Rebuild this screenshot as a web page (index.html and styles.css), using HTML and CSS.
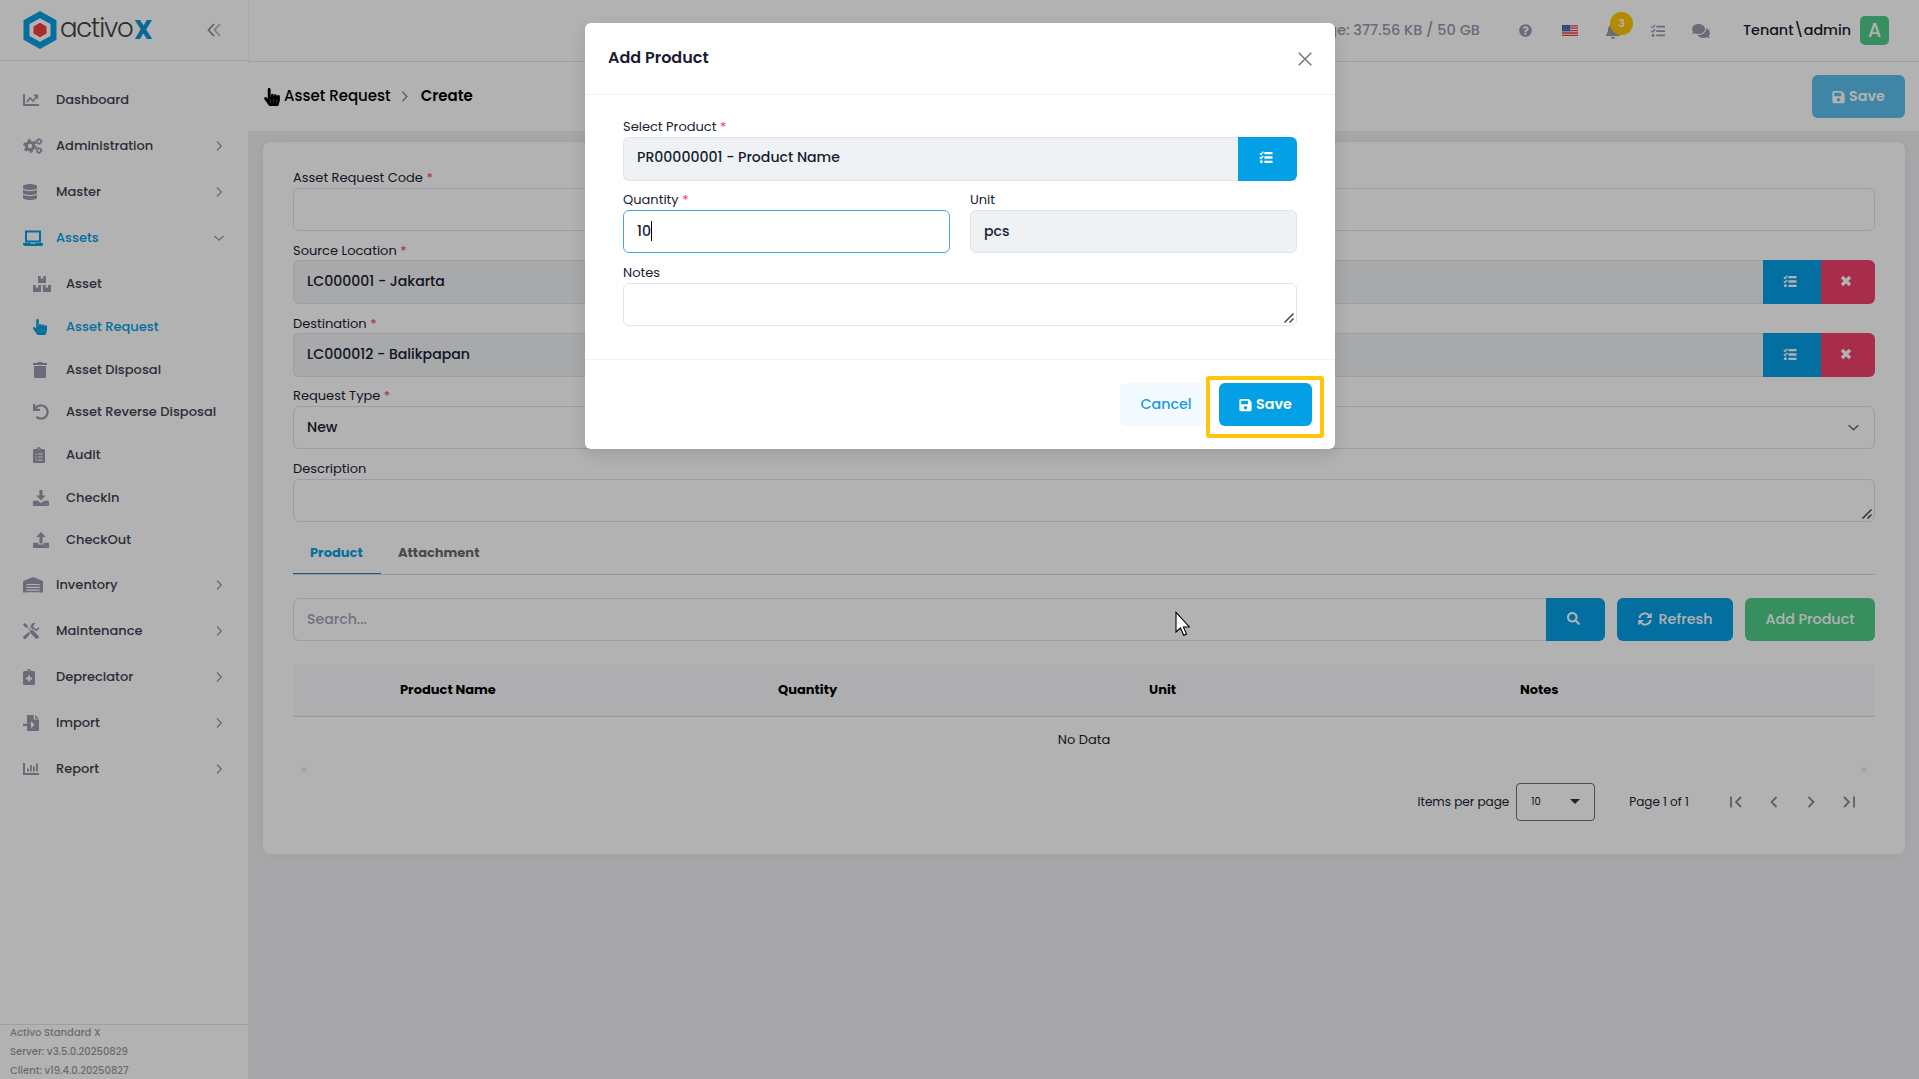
FILE: index.html
```html
<!DOCTYPE html>
<html lang="en">

<head>
  <meta charset="UTF-8">
  <meta name="viewport" content="width=device-width, initial-scale=1.0">
  <title>Asset Request - Create</title>

  <link rel="stylesheet" href="styles.css">
</head>

<body>

  <!-- icons -->
  <svg class="sprite" width="0" height="0">
    <symbol id="i-chart" viewBox="0 0 16 16">
      <path d="M1 2v11h15" fill="none" stroke="currentColor" stroke-width="2" />
      <path d="M4 10l3-4 3 3 4-5" fill="none" stroke="currentColor" stroke-width="1.7" />
      <path d="M10 2.500h5.200v5z" />
    </symbol>
    <symbol id="i-bars" viewBox="0 0 16 16">
      <path d="M1 2v11h15" fill="none" stroke="currentColor" stroke-width="2" />
      <path d="M4 7.500h1.800v3H4zM7 4h1.800v6.500H7zM10 5.500h1.800v5H10zM13 2.500h1.800v8H13z" />
    </symbol>
    <symbol id="i-gears" viewBox="0 0 20 16">
      <g fill="none" stroke="currentColor">
        <circle cx="7" cy="8" r="3.700" stroke-width="3" />
        <circle cx="7" cy="8" r="5.900" stroke-width="2" stroke-dasharray="3 3.180" />
        <circle cx="16" cy="3.500" r="2" stroke-width="1.500" />
        <circle cx="16" cy="3.500" r="3" stroke-width="1" stroke-dasharray="1.570 1.570" />
        <circle cx="16" cy="12.500" r="2" stroke-width="1.500" />
        <circle cx="16" cy="12.500" r="3" stroke-width="1" stroke-dasharray="1.570 1.570" />
      </g>
    </symbol>
    <symbol id="i-database" viewBox="0 0 448 512">
      <path d="M448 73.143v45.714C448 159.143 347.667 192 224 192S0 159.143 0 118.857V73.143C0 32.857 100.333 0 224 0s224 32.857 224 73.143zM448 176v102.857C448 319.143 347.667 352 224 352S0 319.143 0 278.857V176c48.125 33.143 136.208 48.572 224 48.572S399.874 209.143 448 176zm0 160v102.857C448 479.143 347.667 512 224 512S0 479.143 0 438.857V336c48.125 33.143 136.208 48.572 224 48.572S399.874 369.143 448 336z" />
    </symbol>
    <symbol id="i-laptop" viewBox="0 0 20 16">
      <path d="M3 11.500V1.500h14v10z" fill="none" stroke="currentColor" stroke-width="2" />
      <path d="M0 13h7.500l.5.800h4l.5-.8H20v1a2 2 0 0 1-2 2H2a2 2 0 0 1-2-2z" />
    </symbol>
    <symbol id="i-boxes" viewBox="0 0 18 16">
      <path d="M5 0h2.700v3l1.300-.8 1.300.8V0H13v7H5zM0 9h2.700v3l1.200-.8 1.200.8V9h3v7H0zM9.900 9h2.700v3l1.200-.8 1.200.8V9h3v7H9.900z" />
    </symbol>
    <symbol id="i-hand" viewBox="0 0 448 512">
      <path d="M448 240v96c0 3.084-.356 6.159-1.063 9.162l-32 136C410.686 499.230 394.562 512 376 512H168a40.004 40.004 0 0 1-32.350-16.473l-127.997-176c-12.993-17.866-9.043-42.883 8.822-55.876 17.867-12.994 42.884-9.043 55.877 8.823L104 315.992V40c0-22.091 17.908-40 40-40s40 17.909 40 40v200h8v-40c0-22.091 17.908-40 40-40s40 17.909 40 40v40h8v-24c0-22.091 17.908-40 40-40s40 17.909 40 40v24h8c0-22.091 17.908-40 40-40s40 17.909 40 40zm-256 80h-8v96h8v-96zm88 0h-8v96h8v-96zm88 0h-8v96h8v-96z" />
    </symbol>
    <symbol id="i-trash" viewBox="0 0 448 512">
      <path d="M32 464a48 48 0 0 0 48 48h288a48 48 0 0 0 48-48V128H32zM432 32H312l-9.400-18.700A24 24 0 0 0 281.100 0H166.800a23.720 23.720 0 0 0-21.400 13.300L136 32H16A16 16 0 0 0 0 48v32a16 16 0 0 0 16 16h416a16 16 0 0 0 16-16V48a16 16 0 0 0-16-16z" />
    </symbol>
    <symbol id="i-undo" viewBox="0 0 512 512">
      <path d="M212.333 224.333H12c-6.627 0-12-5.373-12-12V12C0 5.373 5.373 0 12 0h48c6.627 0 12 5.373 12 12v78.112C117.773 39.279 184.260 7.470 258.175 8.007c136.906.994 246.448 111.623 246.157 248.532C504.041 393.258 393.120 504 256.333 504c-64.089 0-122.496-24.313-166.510-64.215-5.099-4.622-5.334-12.554-.467-17.420l33.967-33.967c4.474-4.474 11.662-4.717 16.401-.525C170.760 415.336 211.580 432 256.333 432c97.268 0 176-78.716 176-176 0-97.267-78.716-176-176-176-58.496 0-110.280 28.476-142.274 72.333h98.274c6.627 0 12 5.373 12 12v48c0 6.627-5.373 12-12 12z" />
    </symbol>
    <symbol id="i-clipboard" viewBox="0 0 12 16">
      <path fill-rule="evenodd" d="M1.500 2H4a2 2 0 0 1 4 0h2.500A1.500 1.500 0 0 1 12 3.500v11a1.500 1.500 0 0 1-1.500 1.500h-9A1.500 1.500 0 0 1 0 14.500v-11A1.500 1.500 0 0 1 1.500 2zM5.400 2a.6.600 0 1 0 1.200 0 .6.600 0 1 0-1.200 0zM2.500 6.500v1.200h1.200V6.500zM5 6.600v1h4.500v-1zM2.500 9.400v1.200h1.200V9.400zM5 9.500v1h4.500v-1zM2.500 12.300v1.200h1.200v-1.200zM5 12.400v1h4.500v-1z" />
    </symbol>
    <symbol id="i-medical" viewBox="0 0 12 16">
      <path fill-rule="evenodd" d="M1.500 2H4a2 2 0 0 1 4 0h2.500A1.500 1.500 0 0 1 12 3.500v11a1.500 1.500 0 0 1-1.500 1.500h-9A1.500 1.500 0 0 1 0 14.500v-11A1.500 1.500 0 0 1 1.500 2zM5.400 2a.6.600 0 1 0 1.200 0 .6.600 0 1 0-1.200 0zM5 6.500v2H3v2h2v2h2v-2h2v-2H7v-2z" />
    </symbol>
    <symbol id="i-download" viewBox="0 0 16 16">
      <path d="M6.500 0h3v5.500h3.200L8 10.400 3.300 5.500h3.200z" />
      <path fill-rule="evenodd" d="M.8 10.800H5l3 2.400 3-2.400h4.200a.8.800 0 0 1 .8.800V15.200a.8.800 0 0 1-.8.800H.8a.8.800 0 0 1-.8-.8V11.600a.8.800 0 0 1 .8-.8zM12.800 13.500v1h1v-1z" />
    </symbol>
    <symbol id="i-upload" viewBox="0 0 16 16">
      <path d="M6.500 11.500h3V5h3.200L8 0 3.300 5h3.200z" />
      <path fill-rule="evenodd" d="M.8 10.800h4.400V12.500h5.600v-1.700h4.400a.8.800 0 0 1 .8.800V15.200a.8.800 0 0 1-.8.800H.8a.8.800 0 0 1-.8-.8V11.600a.8.800 0 0 1 .8-.8zM12.800 13.500v1h1v-1z" />
    </symbol>
    <symbol id="i-warehouse" viewBox="0 0 20 16">
      <path d="M0 15.500V5q0-.8.800-1.200L9.400.3q.6-.2 1.200 0l8.600 3.500q.8.400.8 1.200v10.500h-3.500V7h-13v8.500z" />
      <path d="M3.500 8.900h13M3.500 11.700h13M3.500 14.500h13" fill="none" stroke="currentColor" stroke-width="1.600" />
    </symbol>
    <symbol id="i-tools" viewBox="0 0 16 16">
      <path d="M1.500 0L4.500 2.300v1.600l3.300 3.300q1.500-.5 2.700.6l4.900 4.900q.9 1.100 0 2.100l-.6.600q-1 .9-2.100 0L7.800 10.500Q6.700 9.300 7.200 7.800L3.900 4.500H2.300L0 1.500z" />
      <path d="M15.800 3.800l-2.300 2.200-2.600-.9-.6-2.500L12.500.2Q9.800-.4 8.400 1.400 7.200 2.900 7.600 4.600l1.700 1.700q2 .1 3.200 1.300.4.300.7.600Q14.600 7.600 15.400 6.400 16.200 5.200 15.800 3.800zM6.300 8.800L.7 13.100q-1.200 1.500 0 2.500t2.300-.2l4-4.300q-.7-1.100-.7-2.300z" />
    </symbol>
    <symbol id="i-import" viewBox="0 0 16 16">
      <path fill-rule="evenodd" d="M4.700 0h6v4.500H16v10.800a.7.700 0 0 1-.7.700H4.700a.7.700 0 0 1-.7-.7V11h4v2.300L11.700 9.700 8 6.200v2.600H4V.7A.7.700 0 0 1 4.700 0z" />
      <path d="M0 8.800h8V11H0zM12 0l4 3.500h-4z" />
    </symbol>
    <symbol id="i-save" viewBox="0 0 448 512">
      <path d="M433.941 129.941l-83.882-83.882A48 48 0 0 0 316.118 32H48C21.490 32 0 53.490 0 80v352c0 26.510 21.490 48 48 48h352c26.510 0 48-21.490 48-48V163.882a48 48 0 0 0-14.059-33.941zM224 416c-35.346 0-64-28.654-64-64 0-35.346 28.654-64 64-64s64 28.654 64 64c0 35.346-28.654 64-64 64zm96-304.520V212c0 6.627-5.373 12-12 12H76c-6.627 0-12-5.373-12-12V108c0-6.627 5.373-12 12-12h228.520c3.183 0 6.235 1.264 8.485 3.515l3.480 3.480A11.996 11.996 0 0 1 320 111.480z" />
    </symbol>
    <symbol id="i-search" viewBox="0 0 512 512">
      <path d="M505 442.700L405.300 343c-4.500-4.500-10.600-7-17-7H372c27.600-35.300 44-79.700 44-128C416 93.100 322.900 0 208 0S0 93.100 0 208s93.100 208 208 208c48.300 0 92.700-16.400 128-44v16.300c0 6.400 2.500 12.500 7 17l99.700 99.700c9.400 9.400 24.600 9.400 33.900 0l28.300-28.300c9.400-9.400 9.400-24.600.1-34zM208 336c-70.700 0-128-57.200-128-128 0-70.700 57.200-128 128-128 70.700 0 128 57.200 128 128 0 70.700-57.200 128-128 128z" />
    </symbol>
    <symbol id="i-refresh" viewBox="0 0 16 16">
      <path d="M1.600 7A6.300 6.300 0 0 1 12.800 4M14.400 9A6.300 6.300 0 0 1 3.200 12" fill="none" stroke="currentColor" stroke-width="2.200" />
      <path d="M15.700.5v6.300H9.400zM.3 15.500V9.200h6.300z" />
    </symbol>
    <symbol id="i-list" viewBox="0 0 16 16">
      <path d="M6 3h10M6 8h10M6 13h10" fill="none" stroke="currentColor" stroke-width="2" />
      <path d="M.4 2.700l1.500 1.500L4.700 1M.4 7.700l1.500 1.500L4.700 6" fill="none" stroke="currentColor" stroke-width="1.400" />
      <circle cx="2.300" cy="13" r="1.600" />
    </symbol>
    <symbol id="i-list-bold" viewBox="0 0 16 16">
      <path d="M6 2.700h10M6 8h10M6 13.300h10" fill="none" stroke="currentColor" stroke-width="2.900" />
      <path d="M.4 2.700l1.500 1.500L4.700 1M.4 7.700l1.500 1.500L4.700 6" fill="none" stroke="currentColor" stroke-width="1.800" />
      <circle cx="2.300" cy="13.300" r="1.800" />
    </symbol>
    <symbol id="i-times" viewBox="0 0 12 12">
      <path d="M2 2l8 8M10 2l-8 8" fill="none" stroke="currentColor" stroke-width="3.200" />
    </symbol>
    <symbol id="i-question" viewBox="0 0 512 512">
      <path d="M504 256c0 136.997-111.043 248-248 248S8 392.997 8 256C8 119.083 119.043 8 256 8s248 111.083 248 248zM262.655 90c-54.497 0-89.255 22.957-116.549 63.758-3.536 5.286-2.353 12.415 2.715 16.258l34.699 26.310c5.205 3.947 12.621 3.008 16.665-2.122 17.864-22.658 30.113-35.797 57.303-35.797 20.429 0 45.698 13.148 45.698 32.958 0 14.976-12.363 22.667-32.534 33.976C247.128 238.528 216 254.941 216 296v4c0 6.627 5.373 12 12 12h56c6.627 0 12-5.373 12-12v-1.333c0-28.462 83.186-29.647 83.186-106.667 0-58.002-60.165-102-116.531-102zM256 338c-25.365 0-46 20.635-46 46 0 25.364 20.635 46 46 46s46-20.636 46-46c0-25.365-20.635-46-46-46z" />
    </symbol>
    <symbol id="i-bell" viewBox="0 0 448 512">
      <path d="M224 512c35.320 0 63.970-28.650 63.970-64H160.030c0 35.350 28.650 64 63.970 64zm215.390-149.710c-19.320-20.760-55.470-51.990-55.470-154.290 0-77.700-54.480-139.900-127.940-155.160V32c0-17.670-14.320-32-31.980-32s-31.980 14.330-31.980 32v20.840C118.560 68.100 64.080 130.300 64.080 208c0 102.300-36.150 133.530-55.470 154.290-6 6.450-8.660 14.160-8.610 21.710.11 16.400 12.980 32 32.100 32h383.800c19.120 0 32-15.600 32.100-32 .05-7.550-2.610-15.270-8.610-21.710z" />
    </symbol>
    <symbol id="i-comments" viewBox="0 0 576 512">
      <path d="M416 192c0-88.400-93.100-160-208-160S0 103.600 0 192c0 34.300 14.100 65.900 38 92-13.400 30.200-35.500 54.200-35.800 54.500-2.200 2.300-2.800 5.700-1.500 8.700S4.800 352 8 352c36.600 0 66.900-12.300 88.700-25 32.200 15.700 70.300 25 111.300 25 114.900 0 208-71.600 208-160zm122 220c23.900-26 38-57.700 38-92 0-66.900-53.500-124.200-129.300-148.100.9 6.600 1.300 13.300 1.300 20.100 0 105.900-107.700 192-240 192-10.800 0-21.300-.8-31.700-1.900C207.800 439.600 281.800 480 368 480c41 0 79.100-9.200 111.300-25 21.800 12.700 52.100 25 88.700 25 3.200 0 6.100-1.900 7.300-4.800 1.300-2.900.7-6.300-1.500-8.700-.3-.3-22.400-24.200-35.800-54.500z" />
    </symbol>
    <symbol id="i-angle" viewBox="0 0 8 12">
      <path d="M2 1.500L6.200 6 2 10.500" fill="none" stroke="currentColor" stroke-width="1.300" />
    </symbol>
    <symbol id="i-grip" viewBox="0 0 10 10">
      <path d="M.5 9.500l9-9M5.500 9.500l4-4" fill="none" stroke="#444" stroke-width="1.500" />
    </symbol>
  </svg>

  <div class="page">

    <aside class="sidebar">
      <div class="brand">
        <svg class="logo" viewBox="0 0 34 38">
          <path d="M17 0l16.500 9.200v19.600L17 38 .5 28.800V9.200z" fill="#0aa0e0" />
          <path d="M17 7.200l10.500 5.900v11.800L17 30.800 6.500 24.900V13.100z" fill="#fff" />
          <path d="M17 11.800l6.500 3.600v7.200L17 26.200l-6.500-3.600v-7.200z" fill="#f0403e" />
        </svg>
        <span class="logo-text">activo</span><span class="logo-x">X</span>
        <svg class="toggle" viewBox="0 0 14 14">
          <path d="M7 1L1.500 7 7 13" fill="none" stroke="#8a8a9c" stroke-width="1.800" />
          <path d="M13 1L7.500 7l5.500 6" fill="none" stroke="#b5b5c3" stroke-width="1.800" />
        </svg>
      </div>

      <nav class="menu">
        <a class="item"><svg class="w16"><use href="#i-chart" /></svg><span>Dashboard</span></a>
        <a class="item"><svg class="w20"><use href="#i-gears" /></svg><span>Administration</span><svg class="arrow"><use href="#i-angle" /></svg></a>
        <a class="item"><svg class="w14"><use href="#i-database" /></svg><span>Master</span><svg class="arrow"><use href="#i-angle" /></svg></a>
        <a class="item active"><svg class="w20"><use href="#i-laptop" /></svg><span>Assets</span><svg class="arrow open"><use href="#i-angle" /></svg></a>
        <div class="submenu">
          <a class="item"><svg class="w18"><use href="#i-boxes" /></svg><span>Asset</span></a>
          <a class="item active"><svg class="w14"><use href="#i-hand" /></svg><span>Asset Request</span></a>
          <a class="item"><svg class="w14"><use href="#i-trash" /></svg><span>Asset Disposal</span></a>
          <a class="item"><svg class="w16"><use href="#i-undo" /></svg><span>Asset Reverse Disposal</span></a>
          <a class="item"><svg class="w12"><use href="#i-clipboard" /></svg><span>Audit</span></a>
          <a class="item"><svg class="w16"><use href="#i-download" /></svg><span>CheckIn</span></a>
          <a class="item"><svg class="w16"><use href="#i-upload" /></svg><span>CheckOut</span></a>
        </div>
        <a class="item"><svg class="w20"><use href="#i-warehouse" /></svg><span>Inventory</span><svg class="arrow"><use href="#i-angle" /></svg></a>
        <a class="item"><svg class="w16"><use href="#i-tools" /></svg><span>Maintenance</span><svg class="arrow"><use href="#i-angle" /></svg></a>
        <a class="item"><svg class="w12"><use href="#i-medical" /></svg><span>Depreciator</span><svg class="arrow"><use href="#i-angle" /></svg></a>
        <a class="item"><svg class="w16"><use href="#i-import" /></svg><span>Import</span><svg class="arrow"><use href="#i-angle" /></svg></a>
        <a class="item"><svg class="w16"><use href="#i-bars" /></svg><span>Report</span><svg class="arrow"><use href="#i-angle" /></svg></a>
      </nav>

      <div class="version">
        <p>Activo Standard X</p>
        <p>Server: v3.5.0.20250829</p>
        <p>Client: v19.4.0.20250827</p>
      </div>
    </aside>

    <div class="main">
      <header class="topbar">
        <span class="usage">Usage: 377.56 KB / 50 GB</span>
        <svg class="question"><use href="#i-question" /></svg>
        <svg class="flag" viewBox="0 0 16 11">
          <path d="M0 0h16v11H0z" fill="#fff" />
          <path d="M0 .8h16M0 3.200h16M0 5.600h16M0 8h16M0 10.300h16" stroke="#e0444c" stroke-width="1.300" />
          <path d="M0 0h8v6.200H0z" fill="#3b5fb5" />
          <path d="M1 1.500h6M1 3.200h6M1 4.900h6" stroke="#b9c6ea" stroke-width=".6" stroke-dasharray=".8 .8" />
        </svg>
        <div class="bell">
          <svg><use href="#i-bell" /></svg>
          <span class="count">3</span>
        </div>
        <svg class="tasks"><use href="#i-list" /></svg>
        <svg class="comments"><use href="#i-comments" /></svg>
        <span class="user">Tenant\admin</span>
        <span class="avatar">A</span>
      </header>

      <div class="subheader">
        <svg class="hand"><use href="#i-hand" /></svg>
        <span class="crumb">Asset Request</span>
        <svg class="sep"><use href="#i-angle" /></svg>
        <span class="crumb last">Create</span>
        <button type="button" class="btn primary disabled"><svg><use href="#i-save" /></svg>Save</button>
      </div>

      <div class="card">
        <div class="field">
          <label>Asset Request Code <i>*</i></label>
          <div class="input"></div>
        </div>
        <div class="field">
          <label>Source Location <i>*</i></label>
          <div class="group">
            <div class="input readonly">LC000001 - Jakarta</div>
            <button type="button" class="pick"><svg><use href="#i-list-bold" /></svg></button>
            <button type="button" class="clear"><svg><use href="#i-times" /></svg></button>
          </div>
        </div>
        <div class="field">
          <label>Destination <i>*</i></label>
          <div class="group">
            <div class="input readonly">LC000012 - Balikpapan</div>
            <button type="button" class="pick"><svg><use href="#i-list-bold" /></svg></button>
            <button type="button" class="clear"><svg><use href="#i-times" /></svg></button>
          </div>
        </div>
        <div class="field">
          <label>Request Type <i>*</i></label>
          <div class="input select">New<svg><use href="#i-angle" /></svg></div>
        </div>
        <div class="field">
          <label>Description</label>
          <div class="input area"><svg><use href="#i-grip" /></svg></div>
        </div>

        <div class="tabs">
          <a class="tab active">Product</a>
          <a class="tab">Attachment</a>
        </div>

        <div class="toolbar">
          <div class="input search">Search...</div>
          <button type="button" class="find"><svg><use href="#i-search" /></svg></button>
          <button type="button" class="btn primary refresh"><svg><use href="#i-refresh" /></svg>Refresh</button>
          <button type="button" class="btn success">Add Product</button>
        </div>

        <div class="thead">
          <span>Product Name</span>
          <span>Quantity</span>
          <span>Unit</span>
          <span>Notes</span>
        </div>
        <p class="empty">No Data</p>
        <div class="scroll"><i></i><i></i></div>

        <div class="paginator">
          <span class="per">Items per page</span>
          <div class="size">10<i></i></div>
          <span class="range">Page 1 of 1</span>
          <svg viewBox="0 0 16 16"><path d="M3 2.500v11M13 3L8 8l5 5" /></svg>
          <svg viewBox="0 0 16 16"><path d="M10.500 3l-5 5 5 5" /></svg>
          <svg viewBox="0 0 16 16"><path d="M5.500 3l5 5-5 5" /></svg>
          <svg viewBox="0 0 16 16"><path d="M3 3l5 5-5 5M13 2.500v11" /></svg>
        </div>
      </div>
    </div>
  </div>

  <div class="overlay">
    <div class="modal">
      <div class="modal-header">
        <h5>Add Product</h5>
        <svg viewBox="0 0 14 14"><path d="M.7.700l12.600 12.600M13.300.7L.7 13.300" /></svg>
      </div>
      <div class="modal-body">
        <div class="field">
          <label>Select Product <i>*</i></label>
          <div class="group">
            <div class="input readonly">PR00000001 - Product Name</div>
            <button type="button" class="pick"><svg><use href="#i-list-bold" /></svg></button>
          </div>
        </div>
        <div class="row">
          <div class="field">
            <label>Quantity <i>*</i></label>
            <div class="input focus">10<b class="caret"></b></div>
          </div>
          <div class="field">
            <label>Unit</label>
            <div class="input readonly">pcs</div>
          </div>
        </div>
        <div class="field">
          <label>Notes</label>
          <div class="input area"><svg><use href="#i-grip" /></svg></div>
        </div>
      </div>
      <div class="modal-footer">
        <button type="button" class="btn light">Cancel</button>
        <button type="button" class="btn primary"><svg><use href="#i-save" /></svg>Save</button>
        <div class="highlight"></div>
      </div>
    </div>
  </div>

  <svg class="cursor" viewBox="0 0 15 25">
    <path d="M1 1v19.500l4.500-4 3.200 7.300 2.800-1.200-3.100-7.100h6z" fill="#fff" stroke="#000" stroke-width="1.100" />
  </svg>

</body>

</html>
```

FILE: styles.css
```css
* {
  box-sizing: border-box;
}

body {
  margin: 0;
  height: 1079px;
  overflow: hidden;
  background-color: #f0f0f3;
  color: #181c32;
  font-family: Poppins, Inter, "Open Sans", sans-serif;
  font-size: 13px;
}

p,
h5 {
  margin: 0;
}

svg {
  fill: currentColor;
  flex-shrink: 0;
}

button {
  border: 0;
  padding: 0;
  font: inherit;
  color: #fff;
}

.sprite {
  position: absolute;
}

.page {
  display: flex;
  height: 1079px;
}

/* sidebar */
.sidebar {
  width: 248px;
  background-color: #fff;
  display: flex;
  flex-direction: column;
  flex-shrink: 0;
}

.brand {
  height: 61px;
  border-bottom: 1px solid #e8e8ec;
  padding-left: 23px;
  display: flex;
  align-items: center;
}

.logo {
  width: 34px;
  height: 38px;
}

.logo-text {
  width: 72px;
  margin-left: 3px;
  font-size: 26px;
  font-weight: 300;
  letter-spacing: -1.2px;
  line-height: 30px;
  color: #3f4245;
  margin-top: -4px;
}

.logo-x {
  width: 20px;
  margin-left: 2px;
  font-size: 26px;
  font-weight: 700;
  color: #0b94d6;
}

.toggle {
  width: 14px;
  height: 14px;
  margin-left: 53px;
}

.menu {
  flex: 1;
  padding-top: 16px;
}

.item {
  height: 46px;
  padding: 0 25px 0 23px;
  display: flex;
  align-items: center;
  color: #3f4254;
  font-weight: 500;
}

.item span {
  flex: 1;
  white-space: nowrap;
}

.item svg {
  height: 16px;
  color: #9899ac;
}

.w12 { width: 12px; margin-right: 21px; }
.w14 { width: 14px; margin-right: 19px; }
.w16 { width: 16px; margin-right: 17px; }
.w18 { width: 18px; margin-right: 15px; }
.w20 { width: 20px; margin-right: 13px; }

.item .arrow {
  width: 8px;
  height: 12px;
}

.item .open {
  transform: rotate(90deg);
}

.item.active,
.item.active svg {
  color: #04a0e6;
}

.item.active .arrow {
  color: #9899ac;
}

.submenu {
  padding: 2px 0 0;
}

.submenu .item {
  height: 42.700px;
  padding-left: 33px;
}

.version {
  height: 55px;
  padding-left: 10px;
  border-top: 1px solid #e4e4e8;
  font-size: 10px;
  font-weight: 500;
  line-height: 19px;
  color: #9899a4;
}

.version p:first-child {
  line-height: 15px;
  margin-bottom: 2px;
}

/* header */
.main {
  flex: 1;
}

.topbar {
  height: 62px;
  background-color: #fff;
  border-bottom: 1px solid #e4e4e8;
  border-left: 1px solid #f4f4f6;
  padding-right: 29px;
  display: flex;
  align-items: center;
  justify-content: flex-end;
  color: #9899ac;
}

.usage {
  font-size: 14.500px;
  font-weight: 500;
  margin-right: 39px;
}

.question {
  width: 13px;
  height: 13px;
}

.flag {
  width: 16px;
  height: 11px;
  margin-left: 30px;
}

.bell {
  position: relative;
  width: 14px;
  height: 16px;
  margin-left: 28px;
}

.bell svg {
  display: block;
  width: 14px;
  height: 16px;
}

.count {
  position: absolute;
  left: 4px;
  top: -11px;
  width: 23px;
  height: 23px;
  border-radius: 50%;
  background-color: #ffc700;
  color: #fff;
  font-size: 11px;
  font-weight: 600;
  line-height: 23px;
  text-align: center;
}

.tasks {
  width: 14px;
  height: 14px;
  margin-left: 31px;
}

.comments {
  width: 18px;
  height: 16px;
  margin-left: 27px;
}

.user {
  width: 108px;
  margin-left: 33px;
  font-size: 14.300px;
  font-weight: 500;
  color: #181c32;
  white-space: nowrap;
}

.avatar {
  width: 29px;
  height: 29px;
  margin-left: 9px;
  margin-right: 1px;
  border-radius: 5px;
  background-color: #50cd89;
  color: #fff;
  font-size: 19px;
  font-weight: 500;
  line-height: 29px;
  text-align: center;
}

.subheader {
  height: 69px;
  background-color: #fff;
  padding: 0 14px 0 16px;
  display: flex;
  align-items: center;
  font-size: 15px;
  font-weight: 500;
  color: #000;
}

.subheader .hand {
  width: 16px;
  height: 18px;
}

.crumb {
  margin-left: 4px;
  margin-top: -2px;
}

.sep {
  width: 9px;
  height: 13px;
  margin: 0 8px 0 9px;
  color: #7e8299;
}

.crumb.last {
  flex: 1;
  font-weight: 600;
}

/* buttons */
.btn {
  height: 43px;
  border-radius: 6px;
  display: flex;
  align-items: center;
  justify-content: center;
  font-size: 14.300px;
  font-weight: 500;
}

.btn svg {
  width: 13px;
  height: 14px;
  margin-right: 4px;
}

.primary {
  width: 93px;
  background-color: #04a0e6;
  font-weight: 600;
}

.disabled {
  opacity: 0.65;
}

.success {
  width: 130px;
  margin-left: 12px;
  background-color: #50cd89;
}

.light {
  width: 92px;
  background-color: #f3faff;
  color: #1b9be0;
}

.refresh {
  width: 116px;
  margin-left: 12px;
  font-weight: 500;
}

.refresh svg {
  width: 14px;
  margin-right: 7px;
}

/* form */
.card {
  height: 712px;
  margin: 11px 14px 0 15px;
  padding: 26px 30px 0;
  background-color: #fff;
  border-radius: 8px;
  box-shadow: 0 0 12px rgba(76, 87, 125, 0.08);
}

.field {
  height: 72.800px;
}

.field label {
  display: block;
  height: 19.600px;
  line-height: 20px;
  font-size: 13px;
}

.field label i {
  color: #f1416c;
  font-style: normal;
}

.input {
  display: flex;
  align-items: center;
  width: 100%;
  height: 43px;
  padding: 0 13px;
  border: 1px solid #e1e3ea;
  border-radius: 6px;
  background-color: #fff;
  font-size: 14.100px;
  font-weight: 500;
}

.readonly {
  background-color: #eff2f5;
}

.focus {
  border-color: #4ba3e3;
}

.caret {
  width: 1px;
  height: 20px;
  background-color: #000;
}

.group {
  display: flex;
  height: 44px;
}

.group .input {
  flex: 1;
  height: 44px;
  padding-bottom: 2px;
  border-right: 0;
  border-radius: 6px 0 0 6px;
}

.pick,
.clear,
.find {
  display: flex;
  align-items: center;
  justify-content: center;
  padding: 0 4px 2px 0;
}

.pick {
  width: 59px;
  background-color: #04a0e6;
}

.pick:last-child {
  border-radius: 0 6px 6px 0;
}

.pick svg {
  width: 14px;
  height: 13px;
}

.clear {
  width: 54px;
  background-color: #f1416c;
  border-radius: 0 6px 6px 0;
}

.clear svg {
  width: 12px;
  height: 12px;
}

.card .pick {
  width: 58px;
}

.select {
  justify-content: space-between;
}

.select svg {
  width: 9px;
  height: 13px;
  margin-right: 3px;
  color: #5e6278;
  transform: rotate(90deg);
}

.area {
  align-items: flex-end;
  justify-content: flex-end;
  padding: 0 2px 2px 0;
}

.area svg {
  width: 10px;
  height: 10px;
}

.tabs {
  display: flex;
  height: 43px;
  border-bottom: 1px solid #d9dae0;
}

.tab {
  height: 42px;
  padding: 11px 17px 0;
  font-weight: 700;
  color: #68696e;
}

.tab.active {
  width: 88px;
  border-bottom: 1px solid #1b84cf;
  color: #04a0e6;
}

.toolbar {
  display: flex;
  margin-top: 23px;
}

.toolbar .search {
  flex: 1;
  border-right: 0;
  border-radius: 6px 0 0 6px;
  color: #a1a5b7;
}

.find {
  width: 59px;
  background-color: #04a0e6;
  border-radius: 0 6px 6px 0;
}

.find svg {
  width: 13px;
  height: 13px;
}

.thead {
  height: 53px;
  margin-top: 23px;
  padding-left: 107px;
  background-color: #f9fafc;
  border-bottom: 1px solid #d5d8e0;
  display: grid;
  grid-template-columns: 378px 371px 371px 1fr;
  align-items: center;
  font-weight: 700;
  color: #000;
}

.empty {
  padding-top: 14px;
  line-height: 18px;
  text-align: center;
}

.scroll {
  display: flex;
  justify-content: space-between;
  margin-top: 18px;
  padding: 0 8px;
}

.scroll i {
  width: 6px;
  height: 6px;
  border-radius: 50%;
  background-color: #ececef;
}

.paginator {
  display: flex;
  align-items: center;
  justify-content: flex-end;
  height: 38px;
  margin-top: 10px;
  padding-right: 18px;
  font-size: 12px;
}

.per {
  margin-right: 7px;
}

.size {
  width: 79px;
  height: 38px;
  padding: 0 14px;
  border: 1px solid #6e6e73;
  border-radius: 4px;
  display: flex;
  align-items: center;
  justify-content: space-between;
  font-size: 10px;
}

.size i {
  border: 5px solid transparent;
  border-top-color: #333;
  border-bottom: 0;
}

.range {
  width: 60px;
  margin: 0 39px 0 34px;
  white-space: nowrap;
}

.paginator svg {
  width: 16px;
  height: 16px;
  margin-left: 21.600px;
  fill: none;
  stroke: #8a8a90;
  stroke-width: 1.800;
}

.paginator .range + svg {
  margin-left: 0;
}

/* modal */
.overlay {
  position: absolute;
  left: 0;
  top: 0;
  width: 100%;
  height: 1079px;
  padding-top: 23px;
  background-color: rgba(0, 0, 0, 0.3);
}

.modal {
  width: 750px;
  height: 426px;
  margin-left: 585px;
  background-color: #fff;
  border-radius: 6px;
  box-shadow: 0 6px 16px rgba(0, 0, 0, 0.12);
}

.modal-header {
  height: 72px;
  padding: 0 23px;
  border-bottom: 1px solid #eff2f5;
  display: flex;
  align-items: center;
  justify-content: space-between;
}

.modal-header h5 {
  font-size: 16px;
  font-weight: 600;
  margin-top: -2px;
}

.modal-header svg {
  width: 14px;
  height: 14px;
  fill: none;
  stroke: #7b7b7b;
  stroke-width: 1.600;
}

.modal-body {
  height: 264px;
  padding: 22.400px 38px 0;
}

.row {
  display: grid;
  grid-template-columns: 1fr 1fr;
  gap: 20px;
}

.modal-footer {
  position: relative;
  height: 90px;
  padding: 23px 23px 0;
  border-top: 1px solid #eff2f5;
  display: flex;
  justify-content: flex-end;
  gap: 7px;
}

.highlight {
  position: absolute;
  left: 620.500px;
  top: 16px;
  width: 118px;
  height: 62px;
  border: 4px solid #ffc60a;
  border-radius: 3px;
}

.cursor {
  position: absolute;
  left: 1175px;
  top: 611px;
  width: 15px;
  height: 26px;
}
```
